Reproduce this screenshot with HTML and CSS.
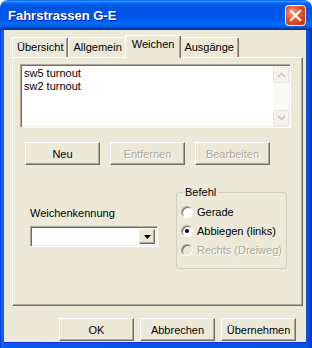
FILE: index.html
```html
<!DOCTYPE html>
<html lang="de">
<head>
    <meta charset="utf-8">
    <title>Fahrstrassen G-E</title>
    <link rel="stylesheet" href="styles.css">
</head>

<body>
<div class="window">
    <div class="titlebar">
        <span class="title">Fahrstrassen G-E</span>
        <span class="close">
            <svg width="21" height="21" viewBox="0 0 21 21">
                <defs>
                    <radialGradient id="closeFill" cx="35%" cy="35%" r="80%">
                        <stop offset="0" stop-color="#f2a18a"/>
                        <stop offset="0.45" stop-color="#e3572f"/>
                        <stop offset="1" stop-color="#c4360d"/>
                    </radialGradient>
                </defs>
                <rect x="0.5" y="0.5" width="20" height="20" rx="3" fill="url(#closeFill)" stroke="#fff"/>
                <path d="M6 6 L15 15 M15 6 L6 15" stroke="#fff" stroke-width="2.2" stroke-linecap="square"/>
            </svg>
        </span>
    </div>

    <div class="frame">
        <div class="client">
            <div class="tabs">
                <div class="tab">Übersicht</div>
                <div class="tab">Allgemein</div>
                <div class="tab active">Weichen</div>
                <div class="tab">Ausgänge</div>
            </div>

            <div class="panel">
                <div class="listbox">
                    <div class="items">
                        <div>sw5 turnout</div>
                        <div>sw2 turnout</div>
                    </div>
                    <div class="scrollbar">
                        <span class="sbtn"><svg width="9" height="6" viewBox="0 0 9 6"><path d="M1 5 L4.5 1.5 L8 5" fill="none" stroke="#c9c6b6" stroke-width="1.6"/></svg></span>
                        <span class="sbtn"><svg width="9" height="6" viewBox="0 0 9 6"><path d="M1 1 L4.5 4.5 L8 1" fill="none" stroke="#c9c6b6" stroke-width="1.6"/></svg></span>
                    </div>
                </div>

                <div class="actions">
                    <button class="btn">Neu</button>
                    <button class="btn" disabled>Entfernen</button>
                    <button class="btn" disabled>Bearbeiten</button>
                </div>

                <div class="lower">
                    <div class="ident">
                        <label class="ident-label">Weichenkennung</label>
                        <div class="combo">
                            <span class="combo-text"></span>
                            <span class="combo-btn"><svg width="7" height="4" viewBox="0 0 7 4"><path d="M0 0 H7 L3.5 4 Z" fill="#000"/></svg></span>
                        </div>
                    </div>

                    <fieldset class="group">
                        <legend>Befehl</legend>
                        <div class="radio-row"><span class="radio"></span>Gerade</div>
                        <div class="radio-row"><span class="radio checked"></span>Abbiegen (links)</div>
                        <div class="radio-row disabled"><span class="radio"></span>Rechts (Dreiweg)</div>
                    </fieldset>
                </div>
            </div>

            <div class="footer">
                <button class="btn">OK</button>
                <button class="btn">Abbrechen</button>
                <button class="btn">Übernehmen</button>
            </div>
        </div>
    </div>
</div>
</body>
</html>
```

FILE: styles.css
```css
* {
    box-sizing: border-box;
}

body {
    margin: 0;
    font-family: Tahoma, "Liberation Sans", sans-serif;
    font-size: 11px;
    color: #000;
    background: #fff;
}

.window {
    width: 312px;
    height: 348px;
    display: flex;
    flex-direction: column;
    border-radius: 8px 8px 0 0;
    overflow: hidden;
}

/* title bar */
.titlebar {
    height: 30px;
    flex: none;
    display: flex;
    align-items: center;
    justify-content: space-between;
    padding: 0 6px 0 8px;
    background: linear-gradient(#0058ee 0%, #3593ff 4%, #288eff 6%, #127dff 8%, #036ffc 10%, #0262ee 14%, #0057e5 20%, #0054e3 24%, #0055eb 56%, #005bf5 66%, #026afe 76%, #0062ef 86%, #0052d6 92%, #0040ab 94%, #003092 100%);
}

.title {
    color: #fff;
    font-family: "Liberation Sans", sans-serif;
    font-weight: bold;
    font-size: 13px;
    text-shadow: 1px 1px #0a1f9c;
}

.close {
    display: flex;
}

/* blue frame round the client area */
.frame {
    flex: 1;
    display: flex;
    padding: 0 6px 5px 4px;
    background: linear-gradient(90deg, #0831d9 0, #166aee 2px, #0a5ae6 4px, #0855dd 306px, #0a4ed6 308px, #0831d9 312px);
}

.client {
    flex: 1;
    display: flex;
    flex-direction: column;
    background: #ece9d8;
    box-shadow: inset 0 -1px #0831d9;
}

/* tabs */
.tabs {
    display: flex;
    align-items: flex-end;
    height: 22px;
    margin-top: 5px;
    padding-left: 8px;
}

.tab {
    height: 20px;
    padding: 3px 4px 0;
    border: 1px solid #fff;
    border-right-color: #716f64;
    border-bottom: none;
    border-radius: 2px 2px 0 0;
    box-shadow: inset -1px 0 #aca899;
    white-space: nowrap;
}

.tab.active {
    position: relative;
    z-index: 1;
    height: 23px;
    margin: 0 -2px -1px;
    padding: 2px 6px 0;
    background: #ece9d8;
}

.panel {
    width: 291px;
    height: 249px;
    margin-left: 8px;
    padding: 6px 7px;
    border: 1px solid #fff;
    border-right-color: #716f64;
    border-bottom-color: #716f64;
    box-shadow: inset -1px -1px #aca899;
}

/* list box */
.listbox {
    display: flex;
    width: 271px;
    height: 64px;
    background: #fff;
    border: 1px solid;
    border-color: #aca899 #fff #fff #aca899;
    box-shadow: inset 1px 1px #716f64, inset -1px -1px #f1efe2;
}

.items {
    flex: 1;
    padding: 2px 0 0 3px;
    line-height: 13px;
}

.scrollbar {
    width: 16px;
    margin: 2px 1px 1px 0;
    display: flex;
    flex-direction: column;
    justify-content: space-between;
    background: #fbfaf7;
}

.sbtn {
    height: 16px;
    display: flex;
    align-items: center;
    justify-content: center;
    border: 1px solid #e8e6dc;
    border-radius: 2px;
    background: #f4f3ee;
}

/* buttons */
.btn {
    width: 75px;
    height: 23px;
    padding: 0;
    font-family: inherit;
    font-size: 11px;
    color: #000;
    background: #ece9d8;
    border: 1px solid;
    border-color: #fff #716f64 #716f64 #fff;
    box-shadow: inset -1px -1px #aca899;
}

.btn:disabled {
    color: #aca899;
    text-shadow: 1px 1px #fff;
}

.actions {
    display: flex;
    gap: 10px;
    margin: 14px 0 0 5px;
}

/* lower part */
.lower {
    display: flex;
    margin-top: 21px;
}

.ident {
    width: 128px;
    margin: 21px 0 0 10px;
}

.ident-label {
    display: block;
    height: 19px;
}

.combo {
    display: flex;
    height: 21px;
    padding: 2px;
    background: #fff;
    border: 1px solid;
    border-color: #aca899 #fff #fff #aca899;
    box-shadow: inset 1px 1px #716f64, inset -1px -1px #f1efe2;
}

.combo-text {
    flex: 1;
}

.combo-btn {
    width: 16px;
    display: flex;
    align-items: center;
    justify-content: center;
    background: #ece9d8;
    border: 1px solid;
    border-color: #f1efe2 #716f64 #716f64 #f1efe2;
    box-shadow: inset -1px -1px #aca899;
}

.group {
    width: 111px;
    height: 83px;
    margin: 0 0 0 18px;
    padding: 4px 0 0 4px;
    border: 1px solid #d0d0bf;
    border-radius: 3px;
}

.group legend {
    padding: 0 2px;
    margin-left: 2px;
}

.radio-row {
    display: flex;
    align-items: center;
    gap: 4px;
    height: 19px;
    white-space: nowrap;
}

.radio-row.disabled {
    color: #aca899;
    text-shadow: 1px 1px #fff;
}

.radio {
    position: relative;
    width: 12px;
    height: 12px;
    border-radius: 50%;
    background: #fff;
    border: 1px solid;
    border-color: #aca899 #fff #fff #aca899;
    box-shadow: inset 1px 1px #716f64;
}

.disabled .radio {
    background: #ece9d8;
}

.radio.checked::after {
    content: "";
    position: absolute;
    left: 3px;
    top: 3px;
    width: 4px;
    height: 4px;
    border-radius: 50%;
    background: #000;
}

/* dialog buttons */
.footer {
    display: flex;
    justify-content: flex-end;
    gap: 6px;
    margin-top: 12px;
    padding-right: 10px;
}
```
